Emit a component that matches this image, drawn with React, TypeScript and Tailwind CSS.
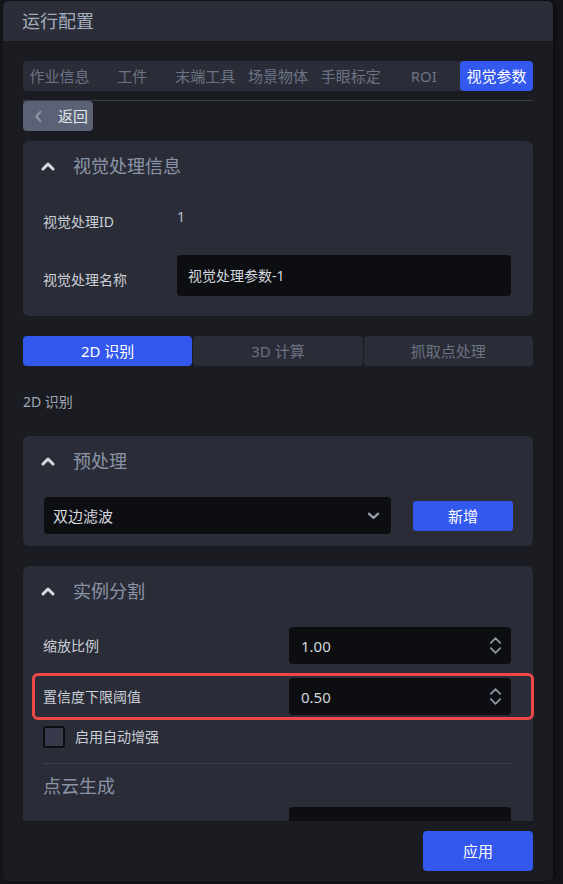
import React from "react";

const FONT = '"Noto Sans", "Noto Sans CJK SC", sans-serif';

function ChevronUp({ className = "" }: { className?: string }) {
  return (
    <svg viewBox="0 0 14 10" className={className} fill="none">
      <polyline points="2,8 7,3 12,8" stroke="currentColor" strokeWidth="3" strokeLinecap="round" strokeLinejoin="round" />
    </svg>
  );
}

function Spinner() {
  return (
    <div className="flex flex-col items-center gap-[3px] text-[#8e95a5]">
      <svg viewBox="0 0 14 8" className="w-[13px] h-[8px]" fill="none">
        <polyline points="2,7 7,2 12,7" stroke="currentColor" strokeWidth="2" strokeLinecap="round" strokeLinejoin="round" />
      </svg>
      <svg viewBox="0 0 14 8" className="w-[13px] h-[8px]" fill="none">
        <polyline points="2,1 7,6 12,1" stroke="currentColor" strokeWidth="2" strokeLinecap="round" strokeLinejoin="round" />
      </svg>
    </div>
  );
}

function CardHeader({ title }: { title: string }) {
  return (
    <div className="h-[50px] flex items-center -ml-[2px]">
      <ChevronUp className="w-[14px] h-[10px] text-[#d5d9e0]" />
      <span className="ml-[18px] text-[18px] leading-[24px] text-[#8b94a7]">{title}</span>
    </div>
  );
}

function NumberInput({ value }: { value: string }) {
  return (
    <div className="w-[222px] h-[37px] rounded bg-[#0d0e12] flex items-center justify-between pl-[12px] pr-[9px]">
      <span className="text-[15px] text-[#d3d7de] leading-[20px]">{value}</span>
      <Spinner />
    </div>
  );
}

export default function App() {
  const tabs = ["作业信息", "工件", "末端工具", "场景物体", "手眼标定", "ROI", "视觉参数"];
  return (
    <div className="w-[563px] h-[884px] bg-[#131418] pt-px pl-[3px]" style={{ fontFamily: FONT }}>
      <div className="w-[550px] h-[880px] rounded-md bg-[#1b1c21] flex flex-col overflow-hidden shadow-[2px_0_3px_rgba(0,0,0,0.35)]">
        {/* header */}
        <div className="h-[40px] shrink-0 bg-[#2b2e38] flex items-center pl-[19px]">
          <span className="text-[18px] leading-[24px] text-[#a4adbe]">运行配置</span>
        </div>

        {/* scroll area */}
        <div className="h-[780px] shrink-0 overflow-hidden px-5 pt-5">
          {/* tabs */}
          <div className="h-[30px] rounded bg-[#2a2d37] flex">
            {tabs.map((t, i) => (
              <div
                key={t}
                className={
                  "flex-1 flex items-center justify-center rounded text-[15px] leading-[20px] " +
                  (i === tabs.length - 1 ? "bg-[#3358ee] text-white" : "text-[#6c7384]")
                }
              >
                {t}
              </div>
            ))}
          </div>
          <div className="mt-[9px] h-px bg-[#383b48]" />
          <button className="w-[70px] h-[30px] rounded bg-[#5b6275] flex items-center pl-[11px]">
            <svg viewBox="0 0 10 14" className="w-[9px] h-[13px] text-[#8e95a6]" fill="none">
              <polyline points="7,2 2.5,7 7,12" stroke="currentColor" strokeWidth="2.4" strokeLinecap="round" strokeLinejoin="round" />
            </svg>
            <span className="ml-[15px] text-[15px] leading-[20px] text-[#e1e4ea]">返回</span>
          </button>

          {/* card 1 */}
          <div className="mt-[10px] rounded-md bg-[#2a2d37] pl-5 pr-[22px] pb-5">
            <CardHeader title="视觉处理信息" />
            <div className="flex items-start pt-[16px]">
              <span className="w-[134px] mt-[5px] text-[14px] leading-[20px] text-[#c9cdd6]">视觉处理ID</span>
              <span className="text-[14px] leading-[20px] text-[#b8bec9]">1</span>
            </div>
            <div className="flex items-start mt-[23px]">
              <span className="w-[134px] mt-[15px] text-[14px] leading-[20px] text-[#c9cdd6]">视觉处理名称</span>
              <div className="w-[334px] h-[41px] rounded bg-[#0d0e12] flex items-center pl-[11px]">
                <span className="text-[14px] leading-[20px] text-[#d3d7de]">视觉处理参数-1</span>
              </div>
            </div>
          </div>

          {/* sub tabs */}
          <div className="mt-5 h-[30px] flex gap-px">
            <div className="flex-1 rounded bg-[#3358ee] flex items-center justify-center text-[15px] leading-[20px] text-white">2D 识别</div>
            <div className="flex-1 rounded bg-[#2a2d37] flex items-center justify-center text-[15px] leading-[20px] text-[#6c7384]">3D 计算</div>
            <div className="flex-1 rounded bg-[#2a2d37] flex items-center justify-center text-[15px] leading-[20px] text-[#6c7384]">抓取点处理</div>
          </div>

          <div className="mt-[26px] text-[14px] leading-[20px] text-[#a0a7b5]">2D 识别</div>

          {/* card 2 */}
          <div className="mt-[24px] rounded-md bg-[#2a2d37] px-5 pb-[12px]">
            <CardHeader title="预处理" />
            <div className="mt-[11px] flex items-center">
              <div className="ml-px w-[347px] h-[37px] rounded bg-[#0d0e12] flex items-center justify-between pl-[9px] pr-[11px]">
                <span className="text-[15px] leading-[20px] text-[#d3d7de]">双边滤波</span>
                <svg viewBox="0 0 14 8" className="w-[13px] h-[8px] text-[#9aa0ad]" fill="none">
                  <polyline points="2,1.5 7,6 12,1.5" stroke="currentColor" strokeWidth="2.4" strokeLinecap="round" strokeLinejoin="round" />
                </svg>
              </div>
              <button className="ml-[22px] w-[100px] h-[30px] rounded-[3px] bg-[#3358ee] text-[15px] leading-[20px] text-white">新增</button>
            </div>
          </div>

          {/* card 3 */}
          <div className="mt-5 rounded-md bg-[#2a2d37] px-5 pb-5">
            <CardHeader title="实例分割" />
            <div className="mt-[11px] flex items-center">
              <span className="w-[246px] text-[14px] leading-[20px] text-[#c9cdd6]">缩放比例</span>
              <NumberInput value="1.00" />
            </div>
            <div className="relative mt-[14px] flex items-center">
              <span className="w-[246px] text-[14px] leading-[20px] text-[#c9cdd6]">置信度下限阈值</span>
              <NumberInput value="0.50" />
              <div className="absolute -left-[11px] -right-[21px] -top-[5px] -bottom-[5px] rounded-[6px] border-[3px] border-[#f04848] pointer-events-none" />
            </div>
            <div className="mt-[11px] flex items-center">
              <div className="w-[22px] h-[22px] rounded-[3px] bg-[#363a4a] border-2 border-[#0d0e12]" />
              <span className="ml-[10px] text-[14px] leading-[20px] text-[#c9cdd6]">启用自动增强</span>
            </div>
            <div className="mt-[15px] h-px bg-[#3b3e4b]" />
            <div className="mt-[10px] text-[18px] leading-[24px] text-[#8b94a7]">点云生成</div>
            <div className="mt-[9px] flex items-start">
              <span className="w-[246px] mt-[12px] text-[14px] leading-[20px] text-[#c9cdd6]">点云采样间隔</span>
              <div className="w-[222px] h-[37px] rounded bg-[#0d0e12]" />
            </div>
          </div>
        </div>

        {/* footer */}
        <div className="flex-1 flex justify-end items-start pt-[10px] pr-5">
          <button className="w-[110px] h-[40px] rounded bg-[#3358ee] text-[15px] leading-[20px] text-white">应用</button>
        </div>
      </div>
    </div>
  );
}
